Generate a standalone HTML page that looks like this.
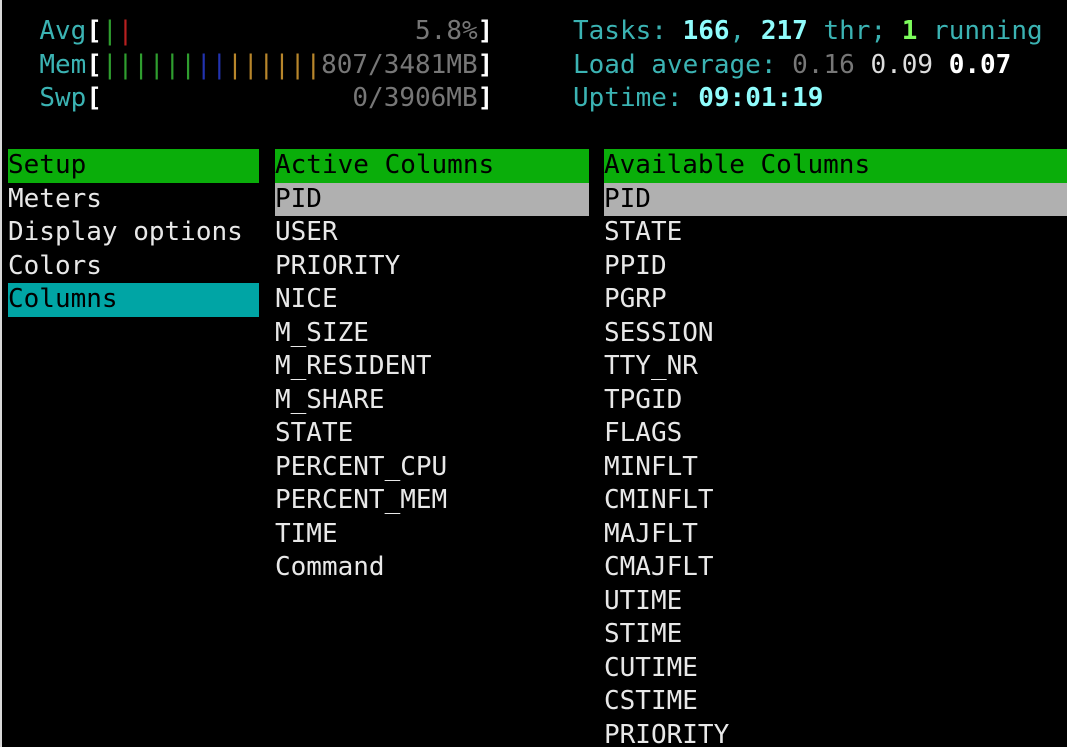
<!DOCTYPE html>
<html><head><style>
html,body{margin:0;padding:0;background:#000;width:1067px;height:747px;overflow:hidden}
body{position:relative;font-family:"DejaVu Sans Mono","Liberation Mono",monospace;font-size:26px;color:#e8e8e8}
.l{position:absolute;white-space:pre;height:33.5px;line-height:33.5px}
.c{color:#3bb3b3}.w{color:#fff;font-weight:bold}.g{color:#777}
.bc{color:#8ffcfc;font-weight:bold}.bg{color:#7dfc5c;font-weight:bold}
.gb{color:#2f9e2f}.rb{color:#b82020}.bb{color:#2233b0}.ob{color:#b8862b}
.bar{position:absolute;height:33.5px}
#edge{position:absolute;left:0;top:0;width:2px;height:747px;background:#d8d8d8}
</style></head><body>
<div id="edge"></div>
<div class="l" style="left:8px;top:15px">  <span class="c">Avg</span><span class="w">[</span><span class="gb">|</span><span class="rb">|</span>                  <span class="g">5.8%</span><span class="w">]</span></div>
<div class="l" style="left:8px;top:48.5px">  <span class="c">Mem</span><span class="w">[</span><span class="gb">||||||</span><span class="bb">||</span><span class="ob">||||||</span><span class="g">807/3481MB</span><span class="w">]</span></div>
<div class="l" style="left:8px;top:82px">  <span class="c">Swp</span><span class="w">[</span>                <span class="g">0/3906MB</span><span class="w">]</span></div>
<div class="l" style="left:573px;top:15px"><span class="c">Tasks: </span><span class="bc">166</span><span class="c">, </span><span class="bc">217</span><span class="c"> thr; </span><span class="bg">1</span><span class="c"> running</span></div>
<div class="l" style="left:573px;top:48.5px"><span class="c">Load average: </span><span class="g">0.16 </span><span style="color:#ddd">0.09 </span><span class="w">0.07</span></div>
<div class="l" style="left:573px;top:82px"><span class="c">Uptime: </span><span class="bc">09:01:19</span></div>

<div class="bar" style="left:8px;top:149px;width:251px;background:#0aae0a"></div>
<div class="bar" style="left:275px;top:149px;width:314px;background:#0aae0a"></div>
<div class="bar" style="left:604px;top:149px;width:463px;background:#0aae0a"></div>
<div class="bar" style="left:275px;top:182.5px;width:314px;background:#b0b0b0"></div>
<div class="bar" style="left:604px;top:182.5px;width:463px;background:#b0b0b0"></div>
<div class="bar" style="left:8px;top:283px;width:251px;background:#00a5a5"></div>

<div class="l" style="left:8px;top:149px;color:#000">Setup</div>
<div class="l" style="left:8px;top:182.5px">Meters</div>
<div class="l" style="left:8px;top:216px">Display options</div>
<div class="l" style="left:8px;top:249.5px">Colors</div>
<div class="l" style="left:8px;top:283px;color:#000">Columns</div>

<div class="l" style="left:275px;top:149px;color:#000">Active Columns</div>
<div class="l" style="left:275px;top:182.5px;color:#000">PID</div>
<div class="l" style="left:275px;top:216px">USER</div>
<div class="l" style="left:275px;top:249.5px">PRIORITY</div>
<div class="l" style="left:275px;top:283px">NICE</div>
<div class="l" style="left:275px;top:316.5px">M_SIZE</div>
<div class="l" style="left:275px;top:350px">M_RESIDENT</div>
<div class="l" style="left:275px;top:383.5px">M_SHARE</div>
<div class="l" style="left:275px;top:417px">STATE</div>
<div class="l" style="left:275px;top:450.5px">PERCENT_CPU</div>
<div class="l" style="left:275px;top:484px">PERCENT_MEM</div>
<div class="l" style="left:275px;top:517.5px">TIME</div>
<div class="l" style="left:275px;top:551px">Command</div>

<div class="l" style="left:604px;top:149px;color:#000">Available Columns</div>
<div class="l" style="left:604px;top:182.5px;color:#000">PID</div>
<div class="l" style="left:604px;top:216px">STATE</div>
<div class="l" style="left:604px;top:249.5px">PPID</div>
<div class="l" style="left:604px;top:283px">PGRP</div>
<div class="l" style="left:604px;top:316.5px">SESSION</div>
<div class="l" style="left:604px;top:350px">TTY_NR</div>
<div class="l" style="left:604px;top:383.5px">TPGID</div>
<div class="l" style="left:604px;top:417px">FLAGS</div>
<div class="l" style="left:604px;top:450.5px">MINFLT</div>
<div class="l" style="left:604px;top:484px">CMINFLT</div>
<div class="l" style="left:604px;top:517.5px">MAJFLT</div>
<div class="l" style="left:604px;top:551px">CMAJFLT</div>
<div class="l" style="left:604px;top:584.5px">UTIME</div>
<div class="l" style="left:604px;top:618px">STIME</div>
<div class="l" style="left:604px;top:651.5px">CUTIME</div>
<div class="l" style="left:604px;top:685px">CSTIME</div>
<div class="l" style="left:604px;top:718.5px">PRIORITY</div>
</body></html>
